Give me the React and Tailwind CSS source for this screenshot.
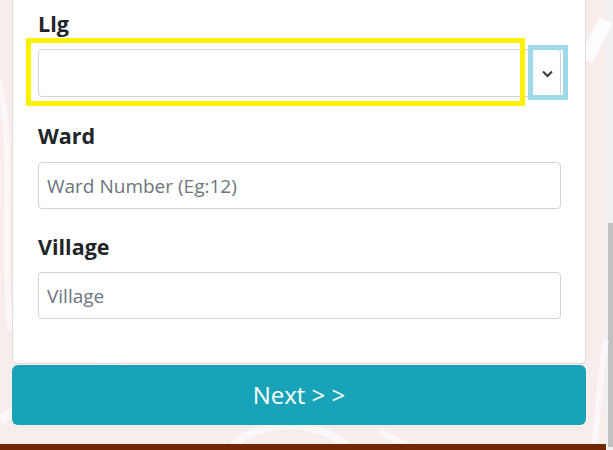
export default function App() {
  return (
    <div className="relative flex h-[450px] w-[613px] overflow-hidden bg-[#f8eded] font-['Open_Sans','Noto_Sans',sans-serif] text-[#212529]">
      <svg className="pointer-events-none absolute inset-0" width="613" height="450" viewBox="0 0 613 450" fill="none">
        <path d="M-10 60 C 20 120, 0 220, 10 330" stroke="#ffffff" strokeWidth="6" opacity="0.5" />
        <path d="M0 420 C 60 380, 120 360, 200 330" stroke="#ffffff" strokeWidth="10" opacity="0.5" />
        <path d="M586 60 L 606 20" stroke="#ffffff" strokeWidth="14" opacity="0.8" />
        <path d="M590 470 C 600 420, 598 380, 606 340" stroke="#ffffff" strokeWidth="6" opacity="0.5" />
        <path d="M230 450 C 250 420, 320 415, 350 450" stroke="#ffffff" strokeWidth="8" opacity="0.6" />
        <path d="M380 430 C 400 445, 420 450, 440 450" stroke="#ffffff" strokeWidth="6" opacity="0.5" />
      </svg>

      <div className="relative flex w-[606px] flex-col">
        <div className="ml-[12px] mr-[20px] flex flex-col rounded-b-[4px] border-x border-b border-[#dcdcdc] bg-white pb-[44px] pl-[25px] pr-[24px] pt-[8px]">
          <div className="flex flex-col">
            <label className="text-[21.5px] font-bold leading-[31px]">Llg</label>
            <div className="relative mt-[10px] h-[48px] rounded-[4px] border border-[#ced4da] bg-white">
              <svg className="absolute right-[7px] top-[20px]" width="11" height="8" viewBox="0 0 11 8" fill="none">
                <path d="M1 1.5 L5.5 6 L10 1.5" stroke="#343a40" strokeWidth="2" />
              </svg>
            </div>
          </div>

          <div className="mt-[23px] flex flex-col">
            <label className="text-[21.5px] font-bold leading-[31px]">Ward</label>
            <input
              className="mt-[11px] h-[47px] rounded-[4px] border border-[#ced4da] bg-white px-[8px] text-[19px] text-[#495057] outline-none placeholder:text-[#6c757d]"
              placeholder="Ward Number (Eg:12)"
            />
          </div>

          <div className="mt-[22px] flex flex-col">
            <label className="text-[21.5px] font-bold leading-[31px]">Village</label>
            <input
              className="mt-[10px] h-[47px] rounded-[4px] border border-[#ced4da] bg-white px-[8px] text-[19px] text-[#495057] outline-none placeholder:text-[#6c757d]"
              placeholder="Village"
            />
          </div>
        </div>

        <button className="ml-[12px] mr-[20px] mt-[1px] h-[60px] rounded-[6px] bg-[#19a3b9] text-[24px] text-white">
          Next &gt; &gt;
        </button>

        <div className="flex-1" />
        <div className="h-[6px] bg-[#722700]" />

        <div className="pointer-events-none absolute left-[26px] top-[38px] h-[68px] w-[499px] border-[5px] border-[#fff200]" />
        <div className="pointer-events-none absolute left-[528px] top-[45px] h-[55px] w-[40px] border-[5px] border-[#9ed8e9]" />
      </div>

      <div className="flex w-[7px] flex-col bg-[#f1f1f1] pl-[2px]">
        <div className="h-[223px]" />
        <div className="h-[224px] bg-[#c1c1c1]" />
      </div>
    </div>
  );
}
